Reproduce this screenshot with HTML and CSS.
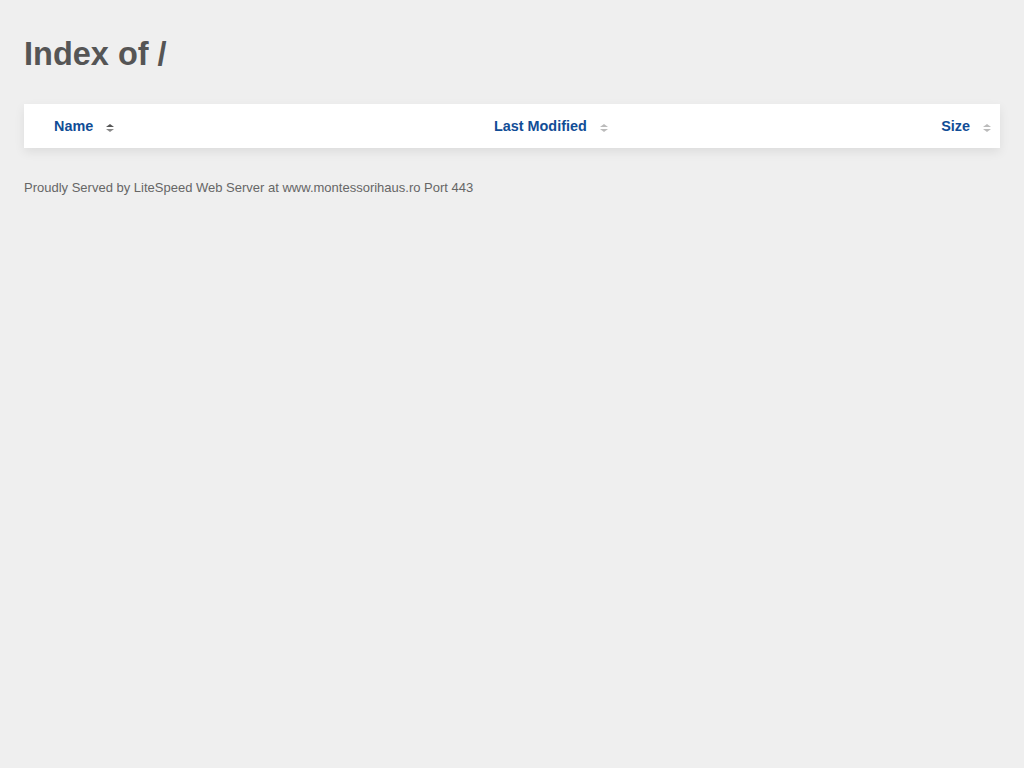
FILE: index.html
```html
<!DOCTYPE html>
<html lang="en">
<head>
  <meta charset="UTF-8" />
  <meta name="viewport" content="width=device-width, initial-scale=1.0" />
  <title>Index of /</title>
  <link rel="stylesheet" href="styles.css">
</head>
<body>
  <h1>Index of /</h1>
  <table class="listing">
    <thead>
      <tr>
        <th class="col-name"><a href="?C=N&amp;O=D">Name</a><span class="sort active"></span></th>
        <th class="col-date"><a href="?C=M&amp;O=A">Last Modified</a><span class="sort"></span></th>
        <th class="col-size"><a href="?C=S&amp;O=A">Size</a><span class="sort"></span></th>
      </tr>
    </thead>
  </table>
  <address>Proudly Served by LiteSpeed Web Server at www.montessorihaus.ro Port 443</address>
</body>
</html>
```

FILE: styles.css
```css
body {
  margin: 0;
  padding: 24px;
  background: #efefef;
  font-family: "Liberation Sans", Arial, sans-serif;
  color: #555;
}
h1 {
  margin: 12px 0 32px;
  font-size: 32.5px;
  line-height: 36px;
  font-weight: bold;
  color: #555;
}
.listing {
  width: 100%;
  border-collapse: collapse;
  background: #fff;
  box-shadow: 0 4px 10px rgba(0,0,0,0.08);
}
.listing th {
  height: 44px;
  padding: 0;
  font-size: 14.4px;
  font-weight: bold;
  text-align: left;
  white-space: nowrap;
}
.listing th a {
  color: #114d96;
  text-decoration: none;
}
.col-name {
  width: 440px;
  padding-left: 30px !important;
}
.col-size {
  text-align: right !important;
  padding-right: 9px !important;
}
.sort {
  display: inline-block;
  position: relative;
  width: 8px;
  height: 8px;
  margin-left: 13px;
  vertical-align: -1px;
}
.sort::before,
.sort::after {
  content: "";
  position: absolute;
  left: 0;
  border-left: 4px solid transparent;
  border-right: 4px solid transparent;
}
.sort::before {
  top: 0;
  border-bottom: 3px solid #bbb;
}
.sort::after {
  bottom: 0;
  border-top: 3px solid #bbb;
}
.sort.active::before {
  border-bottom-color: #555;
}
.sort.active::after {
  border-top-color: #888;
}
address {
  margin-top: 32px;
  font-style: normal;
  font-size: 13px;
  color: #666;
}
```
